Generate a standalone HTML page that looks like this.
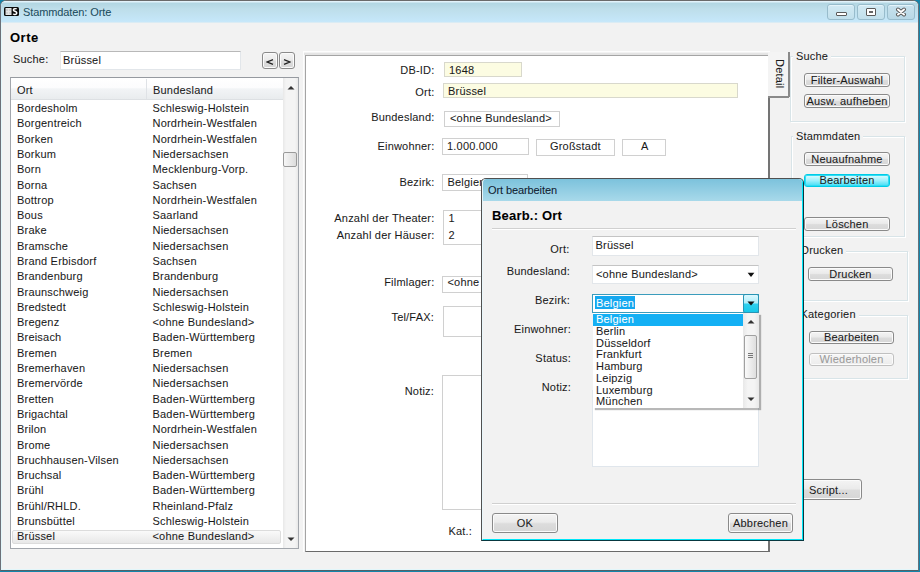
<!DOCTYPE html>
<html><head><meta charset="utf-8">
<style>
*{margin:0;padding:0;box-sizing:border-box}
html,body{width:920px;height:572px;overflow:hidden;background:#1484aa}
body{position:relative;font-family:"Liberation Sans",sans-serif;font-size:11px;color:#1a1a1a}
.t{position:absolute;white-space:nowrap;line-height:13px;letter-spacing:0.2px;-webkit-text-stroke:0.05px currentColor}
.b{position:absolute}
.btn{position:absolute;border:1px solid #8a8a8a;border-radius:3px;background:linear-gradient(#f4f4f4 0%,#ebebeb 45%,#dcdcdc 55%,#d6d6d6 100%);text-align:center;line-height:11px;white-space:nowrap;letter-spacing:0.2px;-webkit-text-stroke:0.05px currentColor;box-shadow:inset 0 0 0 1px #fbfbfb}
.inp{position:absolute;background:#fff;border:1px solid #c8c8c8}
</style></head><body>
<div class="b" style="left:0px;top:0px;width:919px;height:571px;background:#f2f2f2;border:1px solid #6c7078;border-top-color:#6a6a6a;border-bottom-color:#506068;border-radius:6px 6px 0 0"></div>
<div class="b" style="left:1px;top:1px;width:917px;height:569px;border:1px solid #e2f6fa;border-top:none;border-radius:5px 5px 0 0"></div>
<div class="b" style="left:1px;top:1px;width:917px;height:22px;background:linear-gradient(#e2f2fa 0px,#e2f2fa 1px,#b2d6e2 2px,#bedeea 8px,#c4e6f8 19px,#c8e8fa 21px,#eef0ee 22px);border-radius:5px 5px 0 0"></div>
<svg class="b" style="left:4px;top:7px" width="15" height="9" viewBox="0 0 15 9"><rect x="0" y="0" width="15" height="9" rx="1.5" fill="#0a0a0a"/><rect x="1.5" y="1" width="6" height="7" fill="#e4e4e4"/><rect x="2.5" y="2.5" width="1" height="1" fill="#8a8a8a"/><rect x="5.5" y="2.5" width="1" height="1" fill="#8a8a8a"/><rect x="2.5" y="5.5" width="1" height="1" fill="#9a9a9a"/><rect x="5.5" y="5.5" width="1" height="1" fill="#9a9a9a"/><path d="M12.6 2.2 C12.2 1.4 9.4 1.3 9.4 2.9 C9.4 4.4 12.8 4.2 12.8 6 C12.8 7.8 9.6 7.7 9.2 6.8" stroke="#fff" stroke-width="1.5" fill="none"/></svg>
<div class="t" style="left:23px;top:5.7px;color:#1d4d5e;font-size:11px;letter-spacing:-0.1px">Stammdaten: Orte</div>
<div class="b" style="left:827px;top:4px;width:28px;height:16px;border:1px solid #98bccc;border-radius:3px;background:linear-gradient(#d2eaf4,#c2e0ec);box-shadow:inset 0 1px 0 #e4f4fa"></div>
<div class="b" style="left:857px;top:4px;width:28px;height:16px;border:1px solid #98bccc;border-radius:3px;background:linear-gradient(#d2eaf4,#c2e0ec);box-shadow:inset 0 1px 0 #e4f4fa"></div>
<div class="b" style="left:887px;top:4px;width:28px;height:16px;border:1px solid #98bccc;border-radius:3px;background:linear-gradient(#c8e2ee,#b8d8e6);box-shadow:inset 0 1px 0 #e4f4fa"></div>
<div class="b" style="left:836px;top:12px;width:11px;height:4px;background:#fff;border:1px solid #5a5a5a;border-radius:1px"></div>
<div class="b" style="left:866px;top:8px;width:10px;height:8px;background:#fff;border:1px solid #5a5a5a;border-radius:1px"></div>
<div class="b" style="left:869px;top:11px;width:4px;height:2px;background:#666"></div>
<svg class="b" style="left:895px;top:7px" width="12" height="10" viewBox="0 0 12 10"><path d="M3 2.5 L9 7.5 M9 2.5 L3 7.5" stroke="#5a5a5a" stroke-width="4" stroke-linecap="round"/><path d="M3 2.5 L9 7.5 M9 2.5 L3 7.5" stroke="#fff" stroke-width="2" stroke-linecap="round"/></svg>
<div class="t" style="left:10px;top:31.2px;font-weight:bold;font-size:13px;color:#000;letter-spacing:0.5px">Orte</div>
<div class="t" style="left:13px;top:53.2px;">Suche:</div>
<div class="b" style="left:60px;top:51px;width:181px;height:19px;background:#fff;border:1px solid #e2e6ea;border-top-color:#b8b8b8;border-left-color:#e8e8e8"></div>
<div class="t" style="left:63px;top:53.7px;">Brüssel</div>
<div class="btn" style="left:262px;top:52px;width:16px;height:17px;line-height:15px"></div>
<svg class="b" style="left:266px;top:59px" width="8" height="6"><path d="M7 0.6 L1.2 3 L7 5.4" stroke="#222" stroke-width="1.2" fill="none"/></svg>
<div class="btn" style="left:279px;top:52px;width:16px;height:17px;line-height:15px"></div>
<svg class="b" style="left:283px;top:59px" width="8" height="6"><path d="M1 0.6 L6.8 3 L1 5.4" stroke="#222" stroke-width="1.2" fill="none"/></svg>
<div class="b" style="left:10px;top:77px;width:289px;height:472px;background:#fff;border:1px solid #a2a6ac;border-top-color:#969aa0"></div>
<div class="b" style="left:11px;top:78px;width:272px;height:22px;background:linear-gradient(#fff 0%,#fcfcfd 45%,#f2f4f6 52%,#e9ecee 100%);border-bottom:1px solid #dde0e3"></div>
<div class="b" style="left:146px;top:79px;width:1px;height:20px;background:#dfe2e6"></div>
<div class="t" style="left:17px;top:83.7px;">Ort</div>
<div class="t" style="left:153px;top:83.7px;">Bundesland</div>
<div class="b" style="left:283px;top:78px;width:15px;height:470px;background:linear-gradient(90deg,#e8e8e8,#f4f4f4 20%,#f4f4f4 80%,#e8e8e8)"></div>
<svg class="b" style="left:287px;top:85px" width="8" height="5"><path d="M0.5 4.5 L4 1 L7.5 4.5Z" fill="#333"/></svg>
<svg class="b" style="left:287px;top:537px" width="8" height="5"><path d="M0.5 0.5 L4 4 L7.5 0.5Z" fill="#333"/></svg>
<div class="b" style="left:283px;top:152px;width:14px;height:15px;border:1px solid #9a9a9a;border-radius:2px;background:linear-gradient(90deg,#f6f6f6,#dcdcdc)"></div>
<div class="b" style="left:12px;top:530px;width:269px;height:14px;border:1px solid #dcdcdc;border-radius:2px;background:linear-gradient(#fafafa,#e8e8e8)"></div>
<div class="t" style="left:17px;top:102.1px;">Bordesholm</div>
<div class="t" style="left:152.5px;top:102.1px;">Schleswig-Holstein</div>
<div class="t" style="left:17px;top:117.4px;">Borgentreich</div>
<div class="t" style="left:152.5px;top:117.4px;">Nordrhein-Westfalen</div>
<div class="t" style="left:17px;top:132.7px;">Borken</div>
<div class="t" style="left:152.5px;top:132.7px;">Nordrhein-Westfalen</div>
<div class="t" style="left:17px;top:148.0px;">Borkum</div>
<div class="t" style="left:152.5px;top:148.0px;">Niedersachsen</div>
<div class="t" style="left:17px;top:163.3px;">Born</div>
<div class="t" style="left:152.5px;top:163.3px;">Mecklenburg-Vorp.</div>
<div class="t" style="left:17px;top:178.5px;">Borna</div>
<div class="t" style="left:152.5px;top:178.5px;">Sachsen</div>
<div class="t" style="left:17px;top:193.8px;">Bottrop</div>
<div class="t" style="left:152.5px;top:193.8px;">Nordrhein-Westfalen</div>
<div class="t" style="left:17px;top:209.1px;">Bous</div>
<div class="t" style="left:152.5px;top:209.1px;">Saarland</div>
<div class="t" style="left:17px;top:224.4px;">Brake</div>
<div class="t" style="left:152.5px;top:224.4px;">Niedersachsen</div>
<div class="t" style="left:17px;top:239.7px;">Bramsche</div>
<div class="t" style="left:152.5px;top:239.7px;">Niedersachsen</div>
<div class="t" style="left:17px;top:255.0px;">Brand Erbisdorf</div>
<div class="t" style="left:152.5px;top:255.0px;">Sachsen</div>
<div class="t" style="left:17px;top:270.3px;">Brandenburg</div>
<div class="t" style="left:152.5px;top:270.3px;">Brandenburg</div>
<div class="t" style="left:17px;top:285.6px;">Braunschweig</div>
<div class="t" style="left:152.5px;top:285.6px;">Niedersachsen</div>
<div class="t" style="left:17px;top:300.9px;">Bredstedt</div>
<div class="t" style="left:152.5px;top:300.9px;">Schleswig-Holstein</div>
<div class="t" style="left:17px;top:316.2px;">Bregenz</div>
<div class="t" style="left:152.5px;top:316.2px;">&lt;ohne Bundesland&gt;</div>
<div class="t" style="left:17px;top:331.4px;">Breisach</div>
<div class="t" style="left:152.5px;top:331.4px;">Baden-Württemberg</div>
<div class="t" style="left:17px;top:346.7px;">Bremen</div>
<div class="t" style="left:152.5px;top:346.7px;">Bremen</div>
<div class="t" style="left:17px;top:362.0px;">Bremerhaven</div>
<div class="t" style="left:152.5px;top:362.0px;">Niedersachsen</div>
<div class="t" style="left:17px;top:377.3px;">Bremervörde</div>
<div class="t" style="left:152.5px;top:377.3px;">Niedersachsen</div>
<div class="t" style="left:17px;top:392.6px;">Bretten</div>
<div class="t" style="left:152.5px;top:392.6px;">Baden-Württemberg</div>
<div class="t" style="left:17px;top:407.9px;">Brigachtal</div>
<div class="t" style="left:152.5px;top:407.9px;">Baden-Württemberg</div>
<div class="t" style="left:17px;top:423.2px;">Brilon</div>
<div class="t" style="left:152.5px;top:423.2px;">Nordrhein-Westfalen</div>
<div class="t" style="left:17px;top:438.5px;">Brome</div>
<div class="t" style="left:152.5px;top:438.5px;">Niedersachsen</div>
<div class="t" style="left:17px;top:453.8px;">Bruchhausen-Vilsen</div>
<div class="t" style="left:152.5px;top:453.8px;">Niedersachsen</div>
<div class="t" style="left:17px;top:469.1px;">Bruchsal</div>
<div class="t" style="left:152.5px;top:469.1px;">Baden-Württemberg</div>
<div class="t" style="left:17px;top:484.3px;">Brühl</div>
<div class="t" style="left:152.5px;top:484.3px;">Baden-Württemberg</div>
<div class="t" style="left:17px;top:499.6px;">Brühl/RHLD.</div>
<div class="t" style="left:152.5px;top:499.6px;">Rheinland-Pfalz</div>
<div class="t" style="left:17px;top:514.9px;">Brunsbüttel</div>
<div class="t" style="left:152.5px;top:514.9px;">Schleswig-Holstein</div>
<div class="t" style="left:17px;top:530.2px;">Brüssel</div>
<div class="t" style="left:152.5px;top:530.2px;">&lt;ohne Bundesland&gt;</div>
<div class="b" style="left:303px;top:51px;width:467px;height:501px;border-left:1px solid #fdfdfd;border-top:1px solid #fdfdfd"></div>
<div class="b" style="left:304px;top:53px;width:465px;height:2px;background:#e4e4e4"></div>
<div class="b" style="left:305px;top:55px;width:465px;height:497px;background:#fff;border-left:1px solid #a4a4a4;border-top:1px solid #a4a4a4;border-right:2px solid #747474;border-bottom:1px solid #6a6a6a"></div>
<div class="b" style="left:768px;top:52px;width:22px;height:45px;background:#f4f4f4;border-right:2px solid #8a8a8a"></div>
<div class="b" style="left:768px;top:96px;width:21px;height:2px;background:#8a8a8a"></div>
<div class="t" style="left:773px;top:59px;writing-mode:vertical-rl;line-height:13px">Detail</div>
<div class="t" style="right:485.5px;top:63.7px;text-align:right;">DB-ID:</div>
<div class="b" style="left:444px;top:62px;width:78px;height:15px;background:#fcfce2;border:1px solid #d8d8cc"></div>
<div class="t" style="left:449px;top:63.7px;">1648</div>
<div class="t" style="right:485.5px;top:85.7px;text-align:right;">Ort:</div>
<div class="b" style="left:443px;top:83px;width:295px;height:15px;background:#fcfce2;border:1px solid #d8d8cc"></div>
<div class="t" style="left:448px;top:85.2px;">Brüssel</div>
<div class="t" style="right:485.5px;top:111.2px;text-align:right;">Bundesland:</div>
<div class="b" style="left:444px;top:111px;width:116px;height:16px;background:#fff;border:1px solid #d0d0d0"></div>
<div class="t" style="left:450px;top:111.7px;">&lt;ohne Bundesland&gt;</div>
<div class="t" style="right:485.5px;top:139.7px;text-align:right;">Einwohner:</div>
<div class="b" style="left:442px;top:138px;width:87px;height:17px;background:#fff;border:1px solid #d0d0d0"></div>
<div class="t" style="left:447px;top:139.7px;">1.000.000</div>
<div class="b" style="left:536px;top:139px;width:79px;height:17px;background:#fff;border:1px solid #d0d0d0"></div>
<div class="t" style="left:550px;top:139.7px;">Großstadt</div>
<div class="b" style="left:622px;top:139px;width:44px;height:17px;background:#fff;border:1px solid #d0d0d0"></div>
<div class="t" style="left:641px;top:140.2px;">A</div>
<div class="t" style="right:485.5px;top:175.7px;text-align:right;">Bezirk:</div>
<div class="b" style="left:442px;top:174px;width:86px;height:17px;background:#fff;border:1px solid #d0d0d0"></div>
<div class="t" style="left:447.5px;top:175.7px;">Belgien</div>
<div class="t" style="right:485.5px;top:211.7px;text-align:right;">Anzahl der Theater:</div>
<div class="t" style="right:485.5px;top:229.2px;text-align:right;">Anzahl der Häuser:</div>
<div class="b" style="left:443px;top:210px;width:60px;height:35px;background:#fff;border:1px solid #d0d0d0"></div>
<div class="t" style="left:448.5px;top:211.7px;">1</div>
<div class="t" style="left:448.5px;top:228.7px;">2</div>
<div class="t" style="right:485.5px;top:275.7px;text-align:right;">Filmlager:</div>
<div class="b" style="left:442px;top:276px;width:60px;height:17px;background:#fff;border:1px solid #d0d0d0"></div>
<div class="t" style="left:447.5px;top:275.7px;">&lt;ohne</div>
<div class="t" style="right:486px;top:310.7px;text-align:right;">Tel/FAX:</div>
<div class="b" style="left:443px;top:306px;width:60px;height:31px;background:#fff;border:1px solid #d0d0d0"></div>
<div class="t" style="right:486px;top:384.7px;text-align:right;">Notiz:</div>
<div class="b" style="left:442px;top:375px;width:60px;height:135px;background:#fff;border:1px solid #d0d0d0"></div>
<div class="t" style="left:448.5px;top:524.7px;">Kat.:</div>
<div class="b" style="left:790px;top:56px;width:115px;height:66px;border:1px solid #d8e4e8;box-shadow:1px 1px 0 #fff, inset 1px 1px 0 #fff"></div>
<div class="t" style="left:793px;top:50.2px;background:#f2f2f2;padding:0 3px">Suche</div>
<div class="b" style="left:791px;top:136px;width:114px;height:101px;border:1px solid #d8e4e8;box-shadow:1px 1px 0 #fff, inset 1px 1px 0 #fff"></div>
<div class="t" style="left:793px;top:129.7px;background:#f2f2f2;padding:0 3px">Stammdaten</div>
<div class="b" style="left:795px;top:251px;width:113px;height:50px;border:1px solid #d8e4e8;box-shadow:1px 1px 0 #fff, inset 1px 1px 0 #fff"></div>
<div class="t" style="left:798px;top:244.2px;background:#f2f2f2;padding:0 3px">Drucken</div>
<div class="b" style="left:795px;top:315px;width:113px;height:64px;border:1px solid #d8e4e8;box-shadow:1px 1px 0 #fff, inset 1px 1px 0 #fff"></div>
<div class="t" style="left:797.5px;top:308.2px;background:#f2f2f2;padding:0 3px">Kategorien</div>
<div class="btn" style="left:804px;top:73px;width:86px;height:14px;line-height:12px;">Filter-Auswahl</div>
<div class="btn" style="left:804px;top:94px;width:86px;height:14px;line-height:12px;">Ausw. aufheben</div>
<div class="btn" style="left:804px;top:152px;width:86px;height:14px;line-height:12px;">Neuaufnahme</div>
<div class="btn" style="left:804px;top:174px;width:86px;height:13px;line-height:11px;background:linear-gradient(#e0fdff,#9ef0fc 50%,#40def6);border-color:#00cce6;box-shadow:inset 0 0 0 1px #30dcf4">Bearbeiten</div>
<div class="btn" style="left:804px;top:217px;width:86px;height:14px;line-height:12px;">Löschen</div>
<div class="btn" style="left:808px;top:267px;width:85px;height:14px;line-height:12px;">Drucken</div>
<div class="btn" style="left:809px;top:331px;width:85px;height:13px;line-height:11px;">Bearbeiten</div>
<div class="btn" style="left:809px;top:353px;width:85px;height:13px;line-height:11px;color:#9a9a9a;border-color:#c0c0c0;background:linear-gradient(#f6f6f6,#ececec)">Wiederholen</div>
<div class="btn" style="left:800px;top:479px;width:62px;height:21px;line-height:19px;text-align:left;padding-left:8px;line-height:20px">Script...</div>
<div class="b" style="left:481px;top:178px;width:323px;height:363px;background:#f2f2f2;border-left:1px solid #505050;border-top:1px solid #505050;border-right:1px solid #083840;border-bottom:1px solid #083840;border-radius:5px 5px 0 0"></div>
<div class="b" style="left:482px;top:179px;width:321px;height:361px;border-left:1px solid #e8f6fa;border-right:1px solid #00e6f8;border-bottom:1px solid #00e6f8;border-radius:4px 4px 0 0"></div>
<div class="b" style="left:483px;top:179px;width:319px;height:22px;background:linear-gradient(#7cc2dc,#a8d9ea);border-radius:4px 4px 0 0"></div>
<div class="t" style="left:488px;top:183.7px;color:#102030;letter-spacing:-0.1px">Ort bearbeiten</div>
<div class="t" style="left:492px;top:209.2px;font-weight:bold;font-size:13px;color:#000;letter-spacing:0.2px">Bearb.: Ort</div>
<div class="b" style="left:492px;top:228px;width:304px;height:2px;background:#d0d0d0;border-bottom:1px solid #fff"></div>
<div class="t" style="right:350.5px;top:243.2px;text-align:right;">Ort:</div>
<div class="b" style="left:592px;top:236px;width:167px;height:20px;background:#fff;border:1px solid #e2e6ea;border-top-color:#c4c4c4"></div>
<div class="t" style="left:595.5px;top:238.7px;">Brüssel</div>
<div class="t" style="right:350px;top:265.2px;text-align:right;">Bundesland:</div>
<div class="b" style="left:592px;top:265px;width:167px;height:19px;background:#fff;border:1px solid #e2e6ea;border-top-color:#c4c4c4"></div>
<div class="t" style="left:596px;top:267.7px;">&lt;ohne Bundesland&gt;</div>
<svg class="b" style="left:747px;top:272px" width="8" height="6"><path d="M0.6 0.8 L4 5 L7.4 0.8Z" fill="#111"/></svg>
<div class="t" style="right:350px;top:293.7px;text-align:right;">Bezirk:</div>
<div class="t" style="right:349px;top:323.2px;text-align:right;">Einwohner:</div>
<div class="t" style="right:349px;top:351.7px;text-align:right;">Status:</div>
<div class="t" style="right:349px;top:381.2px;text-align:right;">Notiz:</div>
<div class="b" style="left:592px;top:390px;width:167px;height:77px;background:#fff;border:1px solid #e0e6ec"></div>
<div class="b" style="left:592px;top:294px;width:167px;height:19px;background:#fff;border:1px solid #3a9cbc"></div>
<div class="b" style="left:743px;top:294px;width:16px;height:19px;border:1px solid #2894b4;border-radius:2px;background:linear-gradient(#dcf8ff 0%,#b0eefa 45%,#2ed0ee 55%,#18c8ea 100%)"></div>
<svg class="b" style="left:747px;top:301px" width="8" height="5"><path d="M0.5 0.5 L4 4.5 L7.5 0.5Z" fill="#111"/></svg>
<div class="b" style="left:595px;top:296px;width:40px;height:13px;background:#14a8f0"></div>
<div class="t" style="left:596px;top:296.7px;color:#fff">Belgien</div>
<div class="b" style="left:593px;top:313px;width:166px;height:95px;background:#fff;box-shadow:2px 2px 1px rgba(0,0,0,0.28)"></div>
<div class="b" style="left:593px;top:314px;width:150px;height:12px;background:#14b0f4"></div>
<div class="t" style="left:596px;top:313.2px;color:#fff;">Belgien</div>
<div class="t" style="left:596px;top:324.9px;">Berlin</div>
<div class="t" style="left:596px;top:336.7px;">Düsseldorf</div>
<div class="t" style="left:596px;top:348.4px;">Frankfurt</div>
<div class="t" style="left:596px;top:360.2px;">Hamburg</div>
<div class="t" style="left:596px;top:371.9px;">Leipzig</div>
<div class="t" style="left:596px;top:383.7px;">Luxemburg</div>
<div class="t" style="left:596px;top:395.4px;">München</div>
<div class="b" style="left:743px;top:313px;width:16px;height:95px;background:linear-gradient(90deg,#e8e8e8,#f4f4f4 30%,#f4f4f4 70%,#e8e8e8)"></div>
<svg class="b" style="left:747px;top:319px" width="8" height="5"><path d="M0.5 4.5 L4 1 L7.5 4.5Z" fill="#333"/></svg>
<svg class="b" style="left:747px;top:397px" width="8" height="5"><path d="M0.5 0.5 L4 4 L7.5 0.5Z" fill="#333"/></svg>
<div class="b" style="left:744px;top:335px;width:13px;height:44px;border:1px solid #a0a0a0;border-radius:2px;background:linear-gradient(90deg,#fafafa,#dedede)"></div>
<div class="b" style="left:748px;top:353px;width:5px;height:1px;background:#777"></div>
<div class="b" style="left:748px;top:355px;width:5px;height:1px;background:#777"></div>
<div class="b" style="left:748px;top:357px;width:5px;height:1px;background:#777"></div>
<div class="b" style="left:492px;top:503px;width:304px;height:2px;background:#d0d0d0;border-bottom:1px solid #fff"></div>
<div class="btn" style="left:492px;top:513px;width:66px;height:20px;line-height:18px;line-height:18px">OK</div>
<div class="btn" style="left:728px;top:513px;width:65px;height:20px;line-height:18px;line-height:18px">Abbrechen</div>
</body></html>
